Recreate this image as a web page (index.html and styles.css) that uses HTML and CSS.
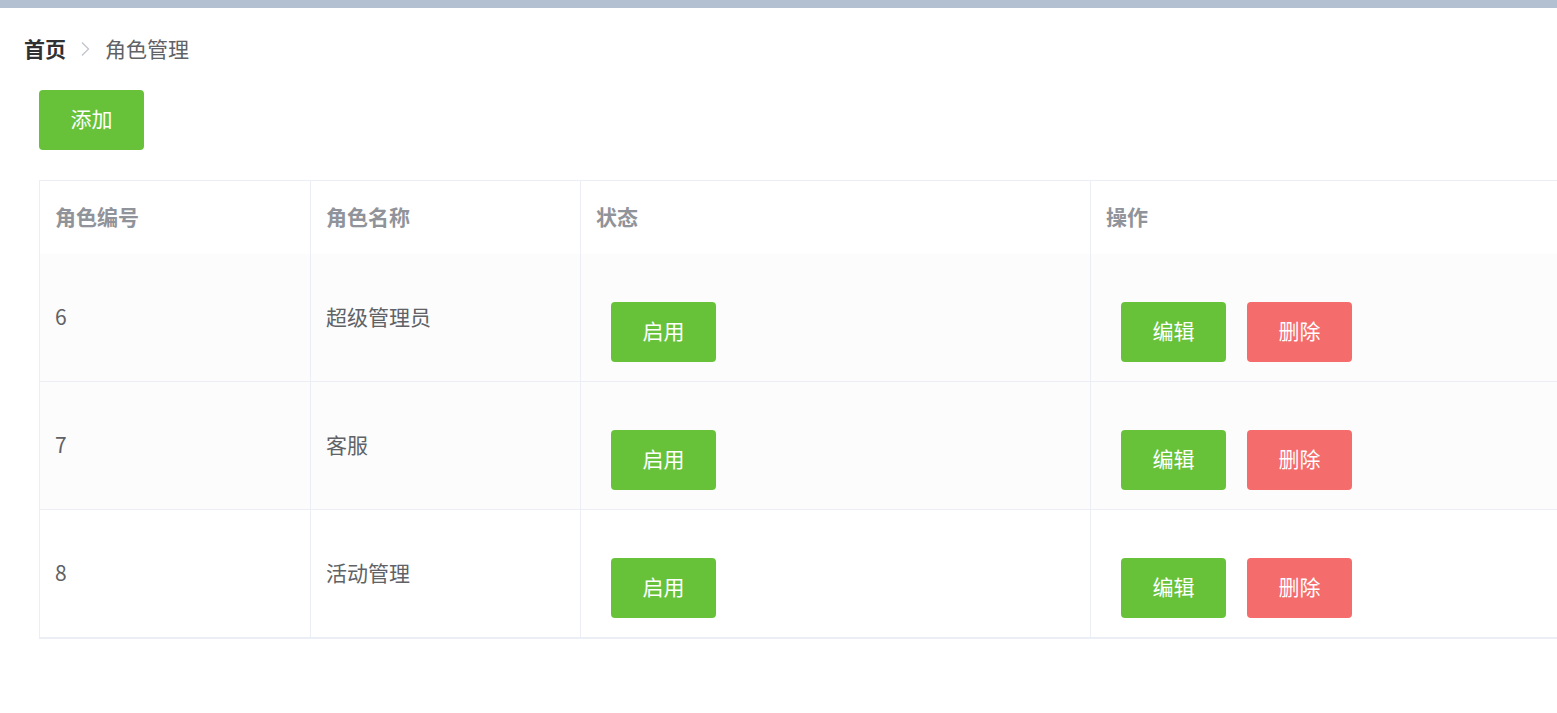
FILE: index.html
```html
<!DOCTYPE html>
<html lang="zh">
<head>
<meta charset="utf-8">
<link rel="stylesheet" href="styles.css">
</head>
<body>
<div class="topbar"></div>
<main class="page">
  <nav class="crumbs">
    <span class="crumb-home">首页</span>
    <svg class="crumb-sep" width="12" height="16" viewBox="0 0 12 16"><path d="M3 1.5 L9.5 8 L3 14.5" fill="none" stroke="#c0c4cc" stroke-width="1.3"/></svg>
    <span class="crumb-cur">角色管理</span>
  </nav>
  <div class="toolbar"><button class="btn btn-green">添加</button></div>
  <div class="table-wrap">
    <table class="grid">
      <colgroup>
        <col class="c1"><col class="c2"><col class="c3"><col class="c4">
      </colgroup>
      <thead>
        <tr><th>角色编号</th><th>角色名称</th><th>状态</th><th>操作</th></tr>
      </thead>
      <tbody>
        <tr class="gray">
          <td>6</td><td>超级管理员</td>
          <td><div class="cell-btns"><button class="btn btn-green">启用</button></div></td>
          <td><div class="cell-btns"><button class="btn btn-green">编辑</button><button class="btn btn-red">删除</button></div></td>
        </tr>
        <tr class="gray">
          <td>7</td><td>客服</td>
          <td><div class="cell-btns"><button class="btn btn-green">启用</button></div></td>
          <td><div class="cell-btns"><button class="btn btn-green">编辑</button><button class="btn btn-red">删除</button></div></td>
        </tr>
        <tr>
          <td>8</td><td>活动管理</td>
          <td><div class="cell-btns"><button class="btn btn-green">启用</button></div></td>
          <td><div class="cell-btns"><button class="btn btn-green">编辑</button><button class="btn btn-red">删除</button></div></td>
        </tr>
      </tbody>
    </table>
  </div>
</main>
</body>
</html>
```

FILE: styles.css
```css
html, body {
  margin: 0;
  padding: 0;
  background: #ffffff;
  overflow: hidden;
  font-family: "Noto Sans CJK SC", "Noto Sans", sans-serif;
}
.topbar {
  height: 8px;
  background: #b3c0d1;
}
.page {
  padding: 0 0 0 24px;
}
.crumbs {
  display: flex;
  align-items: center;
  height: 24px;
  margin-top: 28px;
  margin-bottom: 2px;
  font-size: 21px;
  line-height: 24px;
}
.crumb-home {
  font-weight: 700;
  color: #303133;
}
.crumb-sep {
  margin: 2px 14px 0 13px;
}
.crumb-cur {
  color: #606266;
}
.toolbar {
  padding: 28px 0 0 15px;
  display: flex;
}
.btn {
  width: 105px;
  height: 60px;
  border: none;
  border-radius: 4px;
  color: #ffffff;
  font-family: "Noto Sans CJK SC", "Noto Sans", sans-serif;
  font-size: 21px;
  padding: 0 0 5px 0;
  cursor: pointer;
}
.btn-green { background: #67c23a; }
.btn-red { background: #f56c6c; }
.table-wrap {
  margin: 30px 0 0 15px;
}
.grid {
  border-collapse: collapse;
  table-layout: fixed;
  width: 100%;
  border-top: 1px solid #ebeef5;
  border-left: 1px solid #ebeef5;
  border-bottom: 2px solid #ebeef5;
}
.c1 { width: 271px; }
.c2 { width: 270px; }
.c3 { width: 510px; }
.grid th, .grid td {
  border-right: 1px solid #ebeef5;
  padding: 0 15px 4px 15px;
  text-align: left;
  vertical-align: middle;
  font-size: 21px;
}
.grid th:last-child, .grid td:last-child {
  border-right: none;
}
.grid th {
  height: 69px;
  color: #909399;
  font-weight: 700;
}
.grid td {
  height: 123px;
  color: #606266;
  border-top: 1px solid #ebeef5;
}
.grid tbody tr:first-child td {
  border-top: none;
}
.grid tr.gray td {
  background: #fcfcfc;
}
.cell-btns {
  display: flex;
  gap: 21px;
  padding: 33px 0 0 15px;
}
```
